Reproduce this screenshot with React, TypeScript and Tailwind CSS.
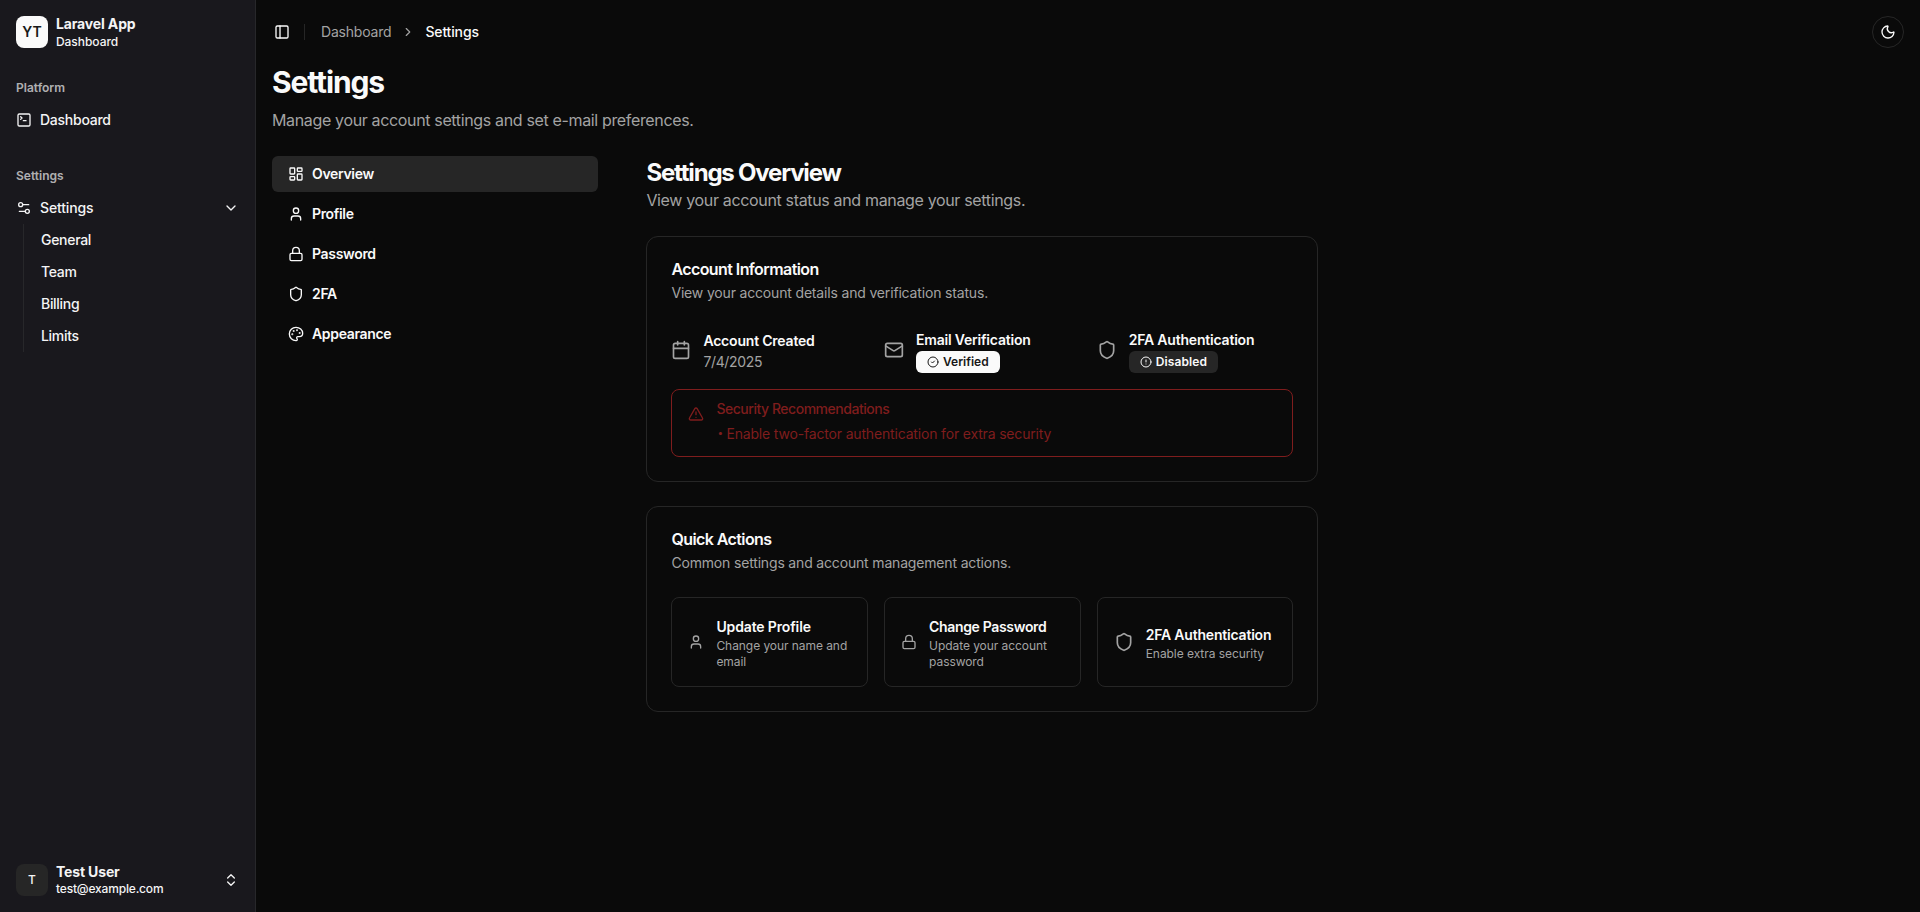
import type { ReactNode } from "react";
import {
  Calendar,
  ChevronDown,
  ChevronRight,
  ChevronsUpDown,
  CircleAlert,
  CircleCheck,
  LayoutDashboard,
  Lock,
  Mail,
  Moon,
  Palette,
  PanelLeft,
  Settings2,
  Shield,
  SquareTerminal,
  TriangleAlert,
  User,
  type LucideIcon,
} from "lucide-react";

const subItems = ["General", "Team", "Billing", "Limits"];

const tabs: { label: string; icon: LucideIcon }[] = [
  { label: "Overview", icon: LayoutDashboard },
  { label: "Profile", icon: User },
  { label: "Password", icon: Lock },
  { label: "2FA", icon: Shield },
  { label: "Appearance", icon: Palette },
];

function Sidebar() {
  return (
    <aside className="flex w-64 shrink-0 flex-col border-r border-[#27272a] bg-[#19181d] text-[#f4f4f5]">
      <div className="flex h-16 items-center gap-2 px-4">
        <div className="flex size-8 items-center justify-center rounded-lg bg-[#fafafa] text-sm font-semibold text-[#171717]">
          YT
        </div>
        <div className="grid pt-px text-sm leading-tight">
          <span className="font-bold tracking-[-0.15px]">Laravel App</span>
          <span className="pt-px text-xs font-medium tracking-[-0.05px]">Dashboard</span>
        </div>
      </div>

      <div className="flex flex-col p-2">
        <div className="flex h-8 items-center px-2 text-xs font-semibold text-[#f4f4f5]/70">Platform</div>
        <a className="flex h-8 items-center gap-2 px-2 text-sm font-medium tracking-[-0.25px]">
          <SquareTerminal className="size-4" />
          Dashboard
        </a>
      </div>

      <div className="flex flex-col px-2 pt-6">
        <div className="-mt-2 flex h-8 items-center px-2 text-xs font-semibold text-[#f4f4f5]/70">Settings</div>
        <a className="flex h-8 items-center gap-2 px-2 text-sm font-medium tracking-[-0.15px]">
          <Settings2 className="size-4" />
          Settings
          <ChevronDown className="ml-auto size-4" />
        </a>
        <ul className="mr-3.5 ml-[15px] flex flex-col gap-1 border-l border-[#27272a] py-0.5 pr-2.5 pl-[9px]">
          {subItems.map((item) => (
            <li key={item} className="flex h-7 items-center px-2 text-sm font-medium tracking-[-0.3px]">
              {item}
            </li>
          ))}
        </ul>
      </div>

      <div className="mt-auto flex h-16 items-center gap-2 px-4">
        <div className="flex size-8 items-center justify-center rounded-lg bg-[#262626] text-xs font-medium">T</div>
        <div className="grid text-sm leading-tight">
          <span className="font-bold tracking-[-0.15px]">Test User</span>
          <span className="text-xs font-medium tracking-[-0.18px]">test@example.com</span>
        </div>
        <ChevronsUpDown className="ml-auto size-4" />
      </div>
    </aside>
  );
}

function Header() {
  return (
    <header className="flex h-16 items-center px-4">
      <PanelLeft className="ml-0.5 size-4" />
      <div className="ml-3.5 h-4 w-px bg-[#262626]" />
      <nav className="ml-4 flex items-center gap-2.5 text-sm">
        <span className="tracking-[-0.2px] text-[#a3a3a3]">Dashboard</span>
        <ChevronRight className="size-3.5 text-[#a3a3a3]" />
        <span className="font-medium tracking-[-0.15px]">Settings</span>
      </nav>
      <button className="ml-auto flex size-8 items-center justify-center rounded-full border border-[#262626]">
        <Moon className="size-4" />
      </button>
    </header>
  );
}

function Card({ title, description, children }: { title: string; description: string; children: ReactNode }) {
  return (
    <section className="rounded-xl border border-[#262626] p-6">
      <h3 className="leading-none font-semibold tracking-[-0.58px]">{title}</h3>
      <p className="mt-1.5 mb-6 text-sm tracking-[-0.17px] text-[#a3a3a3]">{description}</p>
      {children}
    </section>
  );
}

function Status({ icon: Icon, label, children }: { icon: LucideIcon; label: string; children: ReactNode }) {
  return (
    <div className="flex h-[46px] items-center gap-3">
      <Icon className="size-5 text-[#a3a3a3]" />
      <div className="flex flex-col gap-px pt-[3px]">
        <p className="text-sm font-semibold tracking-[-0.2px]">{label}</p>
        {children}
      </div>
    </div>
  );
}

function Action({
  icon: Icon,
  iconClass,
  title,
  titleClass,
  text,
}: {
  icon: LucideIcon;
  iconClass: string;
  title: string;
  titleClass: string;
  text: string;
}) {
  return (
    <button className="flex h-[90px] items-center gap-3 rounded-lg border border-[#262626] px-4 text-left">
      <Icon className={iconClass} />
      <div className="flex flex-col gap-px pt-[3px]">
        <p className={titleClass}>{title}</p>
        <p className="text-xs tracking-[-0.06px] text-[#a3a3a3]">{text}</p>
      </div>
    </button>
  );
}

export default function App() {
  return (
    <div className="flex h-screen w-full overflow-hidden bg-[#0a0a0a] font-[Inter,'Liberation_Sans',sans-serif] text-[#fafafa] antialiased">
      <Sidebar />
      <main className="flex min-w-0 flex-1 flex-col">
        <Header />
        <div className="px-4">
          <h1 className="text-3xl font-bold tracking-[-1.13px]">Settings</h1>
          <p className="mt-2 tracking-[-0.35px] text-[#a3a3a3]">
            Manage your account settings and set e-mail preferences.
          </p>
          <div className="mt-6 flex gap-12">
            <nav className="flex w-1/5 shrink-0 flex-col gap-1">
              {tabs.map(({ label, icon: Icon }, i) => (
                <a
                  key={label}
                  className={
                    i === 0
                      ? "flex h-9 items-center gap-2 rounded-md bg-[#262626] px-4 text-sm font-semibold tracking-[-0.33px]"
                      : "flex h-9 items-center gap-2 rounded-md px-4 text-sm font-semibold tracking-[-0.33px]"
                  }
                >
                  <Icon className="size-4" />
                  {label}
                </a>
              ))}
            </nav>

            <div className="flex w-2xl flex-col">
              <h2 className="-mb-px pt-px text-2xl font-bold tracking-[-1.2px]">Settings Overview</h2>
              <p className="tracking-[-0.34px] text-[#a3a3a3]">View your account status and manage your settings.</p>
              <div className="mt-6 flex flex-col gap-6">
                <Card title="Account Information" description="View your account details and verification status.">
                  <div className="grid grid-cols-3 gap-4">
                    <Status icon={Calendar} label="Account Created">
                      <p className="text-sm tracking-[-0.35px] text-[#a3a3a3]">7/4/2025</p>
                    </Status>
                    <Status icon={Mail} label="Email Verification">
                      <div className="flex h-[22px] w-fit items-center gap-1 rounded-md bg-[#fafafa] px-[11px] text-xs font-semibold text-[#171717]">
                        <CircleCheck className="size-3" />
                        Verified
                      </div>
                    </Status>
                    <Status icon={Shield} label="2FA Authentication">
                      <div className="flex h-[22px] w-fit items-center gap-1 rounded-md bg-[#262626] px-[11px] text-xs font-semibold tracking-[0.1px]">
                        <CircleAlert className="size-3" />
                        Disabled
                      </div>
                    </Status>
                  </div>
                  <div className="mt-4 flex h-[68px] gap-3 rounded-lg border border-[#7f1d1d] px-4 text-sm text-[#7f1d1d]">
                    <TriangleAlert className="mt-4 size-4" />
                    <div className="pt-[9px]">
                      <p className="font-medium tracking-[-0.47px]">Security Recommendations</p>
                      <p className="mt-[5px] flex tracking-[-0.17px]">
                        <span className="w-[10px] pt-px pl-px text-[10px]">•</span>
                        Enable two-factor authentication for extra security
                      </p>
                    </div>
                  </div>
                </Card>

                <Card title="Quick Actions" description="Common settings and account management actions.">
                  <div className="grid grid-cols-3 gap-4">
                    <Action
                      icon={User}
                      iconClass="size-4 shrink-0 text-[#a3a3a3]"
                      title="Update Profile"
                      titleClass="text-sm font-semibold tracking-[-0.14px]"
                      text="Change your name and email"
                    />
                    <Action
                      icon={Lock}
                      iconClass="size-4 shrink-0 text-[#a3a3a3]"
                      title="Change Password"
                      titleClass="text-sm font-semibold tracking-[-0.34px]"
                      text="Update your account password"
                    />
                    <Action
                      icon={Shield}
                      iconClass="size-5 shrink-0 text-[#a3a3a3]"
                      title="2FA Authentication"
                      titleClass="text-sm font-semibold tracking-[-0.2px]"
                      text="Enable extra security"
                    />
                  </div>
                </Card>
              </div>
            </div>
          </div>
        </div>
      </main>
    </div>
  );
}
